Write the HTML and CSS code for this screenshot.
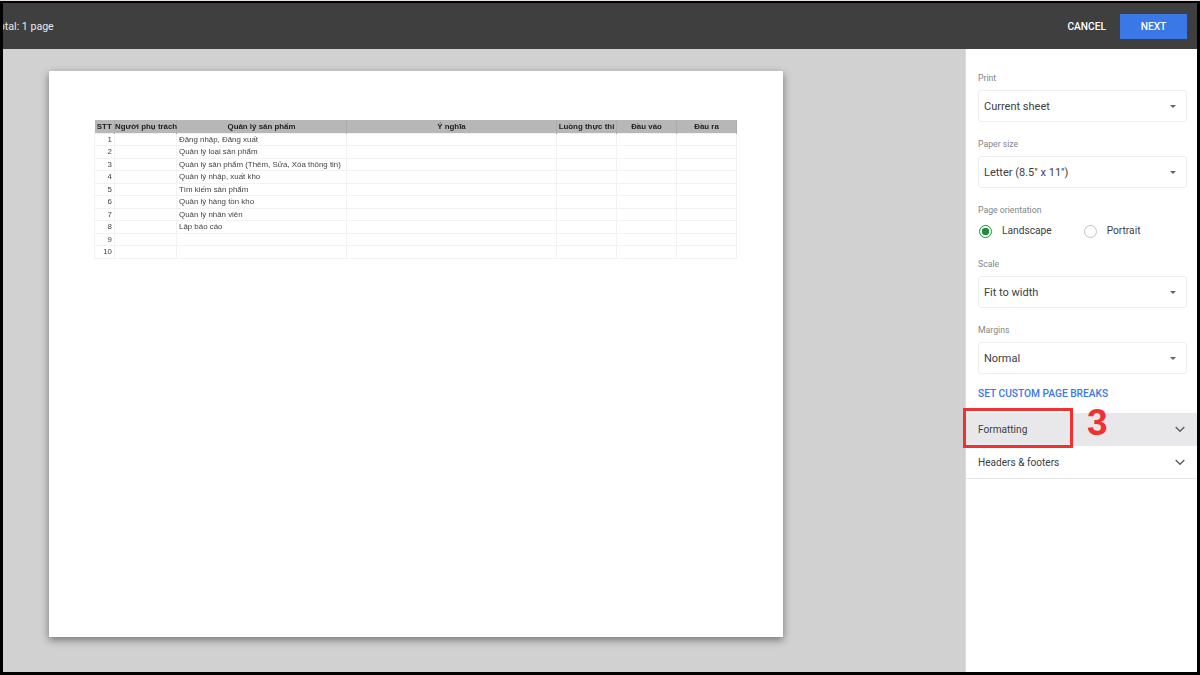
FILE: index.html
```html
<!DOCTYPE html>
<html lang="en">
<head>
  <meta charset="UTF-8">
  <title>Print settings</title>
  <meta name="viewport" content="width=device-width, initial-scale=1.0">
  <link rel="stylesheet" href="styles.css">
</head>
<body>
<div class="frame">
  <header class="topbar">
    <span class="total">Total: 1 page</span>
    <div class="actions">
      <span class="cancel">CANCEL</span>
      <span class="next">NEXT</span>
    </div>
  </header>

  <div class="main">
    <div class="preview">
      <div class="sheet">
        <table class="grid">
          <colgroup>
            <col class="c-stt"><col class="c-owner"><col class="c-name"><col class="c-mean">
            <col class="c-flow"><col class="c-io"><col class="c-io">
          </colgroup>
          <thead>
            <tr>
              <th>STT</th><th>Người phụ trách</th><th>Quản lý sản phẩm</th><th>Ý nghĩa</th>
              <th>Luồng thực thi</th><th>Đầu vào</th><th>Đầu ra</th>
            </tr>
          </thead>
          <tbody>
            <tr><td class="num">1</td><td></td><td>Đăng nhập, Đăng xuất</td><td></td><td></td><td></td><td></td></tr>
            <tr><td class="num">2</td><td></td><td>Quản lý loại sản phẩm</td><td></td><td></td><td></td><td></td></tr>
            <tr><td class="num">3</td><td></td><td>Quản lý sản phẩm (Thêm, Sửa, Xóa thông tin)</td><td></td><td></td><td></td><td></td></tr>
            <tr><td class="num">4</td><td></td><td>Quản lý nhập, xuất kho</td><td></td><td></td><td></td><td></td></tr>
            <tr><td class="num">5</td><td></td><td>Tìm kiếm sản phẩm</td><td></td><td></td><td></td><td></td></tr>
            <tr><td class="num">6</td><td></td><td>Quản lý hàng tồn kho</td><td></td><td></td><td></td><td></td></tr>
            <tr><td class="num">7</td><td></td><td>Quản lý nhân viên</td><td></td><td></td><td></td><td></td></tr>
            <tr><td class="num">8</td><td></td><td>Lập báo cáo</td><td></td><td></td><td></td><td></td></tr>
            <tr><td class="num">9</td><td></td><td></td><td></td><td></td><td></td><td></td></tr>
            <tr><td class="num">10</td><td></td><td></td><td></td><td></td><td></td><td></td></tr>
          </tbody>
        </table>
      </div>
    </div>

    <aside class="side">
      <div class="fields">
        <div class="field">
          <label class="field-label">Print</label>
          <div class="select"><span>Current sheet</span><i class="caret"></i></div>
        </div>
        <div class="field">
          <label class="field-label">Paper size</label>
          <div class="select"><span>Letter (8.5" x 11")</span><i class="caret"></i></div>
        </div>
        <div class="field field-orient">
          <label class="field-label">Page orientation</label>
          <div class="radios">
            <span class="radio radio-on"><i class="dot"></i>Landscape</span>
            <span class="radio"><i class="dot"></i>Portrait</span>
          </div>
        </div>
        <div class="field">
          <label class="field-label">Scale</label>
          <div class="select"><span>Fit to width</span><i class="caret"></i></div>
        </div>
        <div class="field">
          <label class="field-label">Margins</label>
          <div class="select"><span>Normal</span><i class="caret"></i></div>
        </div>
        <a class="breaks">SET CUSTOM PAGE BREAKS</a>
      </div>

      <div class="section section-active">
        <span>Formatting</span>
        <svg class="chev" width="10" height="7" viewBox="0 0 10 7"><path d="M.7 1l4.3 4.3L9.3 1" fill="none" stroke="#5f6368" stroke-width="1.5"/></svg>
      </div>
      <div class="section">
        <span>Headers &amp; footers</span>
        <svg class="chev" width="10" height="7" viewBox="0 0 10 7"><path d="M.7 1l4.3 4.3L9.3 1" fill="none" stroke="#5f6368" stroke-width="1.5"/></svg>
      </div>

      <div class="callout"></div>
      <div class="step">3</div>
    </aside>
  </div>
</div>
</body>
</html>
```

FILE: styles.css
```css
* {
  box-sizing: border-box;
}

body {
  margin: 0;
  padding-top: 1px;
  background: #e6dedd;
  font-family: Roboto, "Liberation Sans", sans-serif;
}

.frame {
  width: 1200px;
  height: 674px;
  border: 3px solid #000;
  border-top-width: 2px;
  display: flex;
  flex-direction: column;
  overflow: hidden;
}

.topbar {
  height: 46px;
  flex-shrink: 0;
  background: #3f3f3f;
  display: flex;
  align-items: center;
  justify-content: space-between;
  padding-right: 10px;
  color: #fff;
}

.total {
  margin-left: -10px;
  font-size: 10.6px;
  color: #e8e8e8;
}

.actions {
  display: flex;
  align-items: center;
  gap: 14px;
}

.cancel, .next {
  font-size: 10.2px;
  font-weight: 500;
}

.next {
  width: 67px;
  height: 25px;
  background: #3b78e7;
  display: flex;
  align-items: center;
  justify-content: center;
}

.main {
  flex: 1;
  display: flex;
  min-height: 0;
}

.preview {
  flex: 1;
  background: #d1d1d1;
  padding: 22px 0 0 46px;
}

.sheet {
  width: 734px;
  height: 566px;
  background: #fff;
  box-shadow: 0 3px 8px rgba(0, 0, 0, 0.45);
  padding: 49px 0 0 45px;
}

.grid {
  width: 642px;
  table-layout: fixed;
  border-collapse: collapse;
  font-family: "Liberation Sans", Arial, sans-serif;
  font-size: 7.9px;
  color: #444;
  filter: blur(0.35px);
}

.c-stt { width: 20px; }
.c-owner { width: 62px; }
.c-name { width: 170px; }
.c-mean { width: 210px; }
.c-flow { width: 60px; }
.c-io { width: 60px; }

.grid th {
  height: 13px;
  padding: 0;
  background: #b7b7b7;
  border-right: 1px solid #adadad;
  color: #222;
  font-weight: 700;
  white-space: nowrap;
}

.grid td {
  height: 12.5px;
  padding: 0 2px;
  border: 1px solid #f2f2f2;
  white-space: nowrap;
}

.grid .num {
  text-align: right;
  padding: 0 2px 0 0;
}

.side {
  position: relative;
  width: 232px;
  flex-shrink: 0;
  background: #fff;
  border-left: 1px solid #dcdcdc;
  color: #3c4043;
}

.fields {
  padding: 23px 10px 0 12px;
}

.field {
  margin-bottom: 16px;
}

.field-label {
  display: block;
  font-size: 8.7px;
  line-height: 12px;
  color: #80868b;
  margin-bottom: 6px;
}

.select {
  height: 32px;
  border: 1px solid #eeeeee;
  border-radius: 3px;
  padding: 0 10px 0 5px;
  display: flex;
  align-items: center;
  justify-content: space-between;
  font-size: 11px;
}

.caret {
  width: 0;
  height: 0;
  border-left: 3.5px solid transparent;
  border-right: 3.5px solid transparent;
  border-top: 3.5px solid #5f6368;
}

.field-orient {
  margin-bottom: 20px;
}

.radios {
  display: flex;
  gap: 32px;
  padding: 2px 0 0 1px;
}

.radio {
  display: flex;
  align-items: center;
  gap: 10px;
  font-size: 10.2px;
  line-height: 14px;
}

.dot {
  width: 13px;
  height: 13px;
  border: 1.5px solid #c4c4c4;
  border-radius: 50%;
  background: #fff;
}

.radio-on .dot {
  border-color: #1e8e3e;
  background: radial-gradient(circle, #1e8e3e 0 3.5px, #fff 4px);
}

.breaks {
  display: block;
  margin-top: -3px;
  font-size: 10.2px;
  font-weight: 500;
  line-height: 14px;
  color: #3b78e7;
}

.section {
  height: 33px;
  padding: 0 12px 0 12px;
  display: flex;
  align-items: center;
  justify-content: space-between;
  font-size: 10.1px;
  border-bottom: 1px solid #e8e8e8;
}

.section-active {
  margin-top: 12px;
  background: #e8e8ea;
  border-bottom: 0;
}

.callout {
  position: absolute;
  left: -3px;
  top: 359px;
  width: 110px;
  height: 40px;
  border: 3px solid #f23030;
}

.step {
  position: absolute;
  left: 121px;
  top: 353px;
  font-family: "Liberation Sans", Arial, sans-serif;
  font-size: 37px;
  font-weight: 700;
  line-height: 42px;
  color: #f23030;
}
```
